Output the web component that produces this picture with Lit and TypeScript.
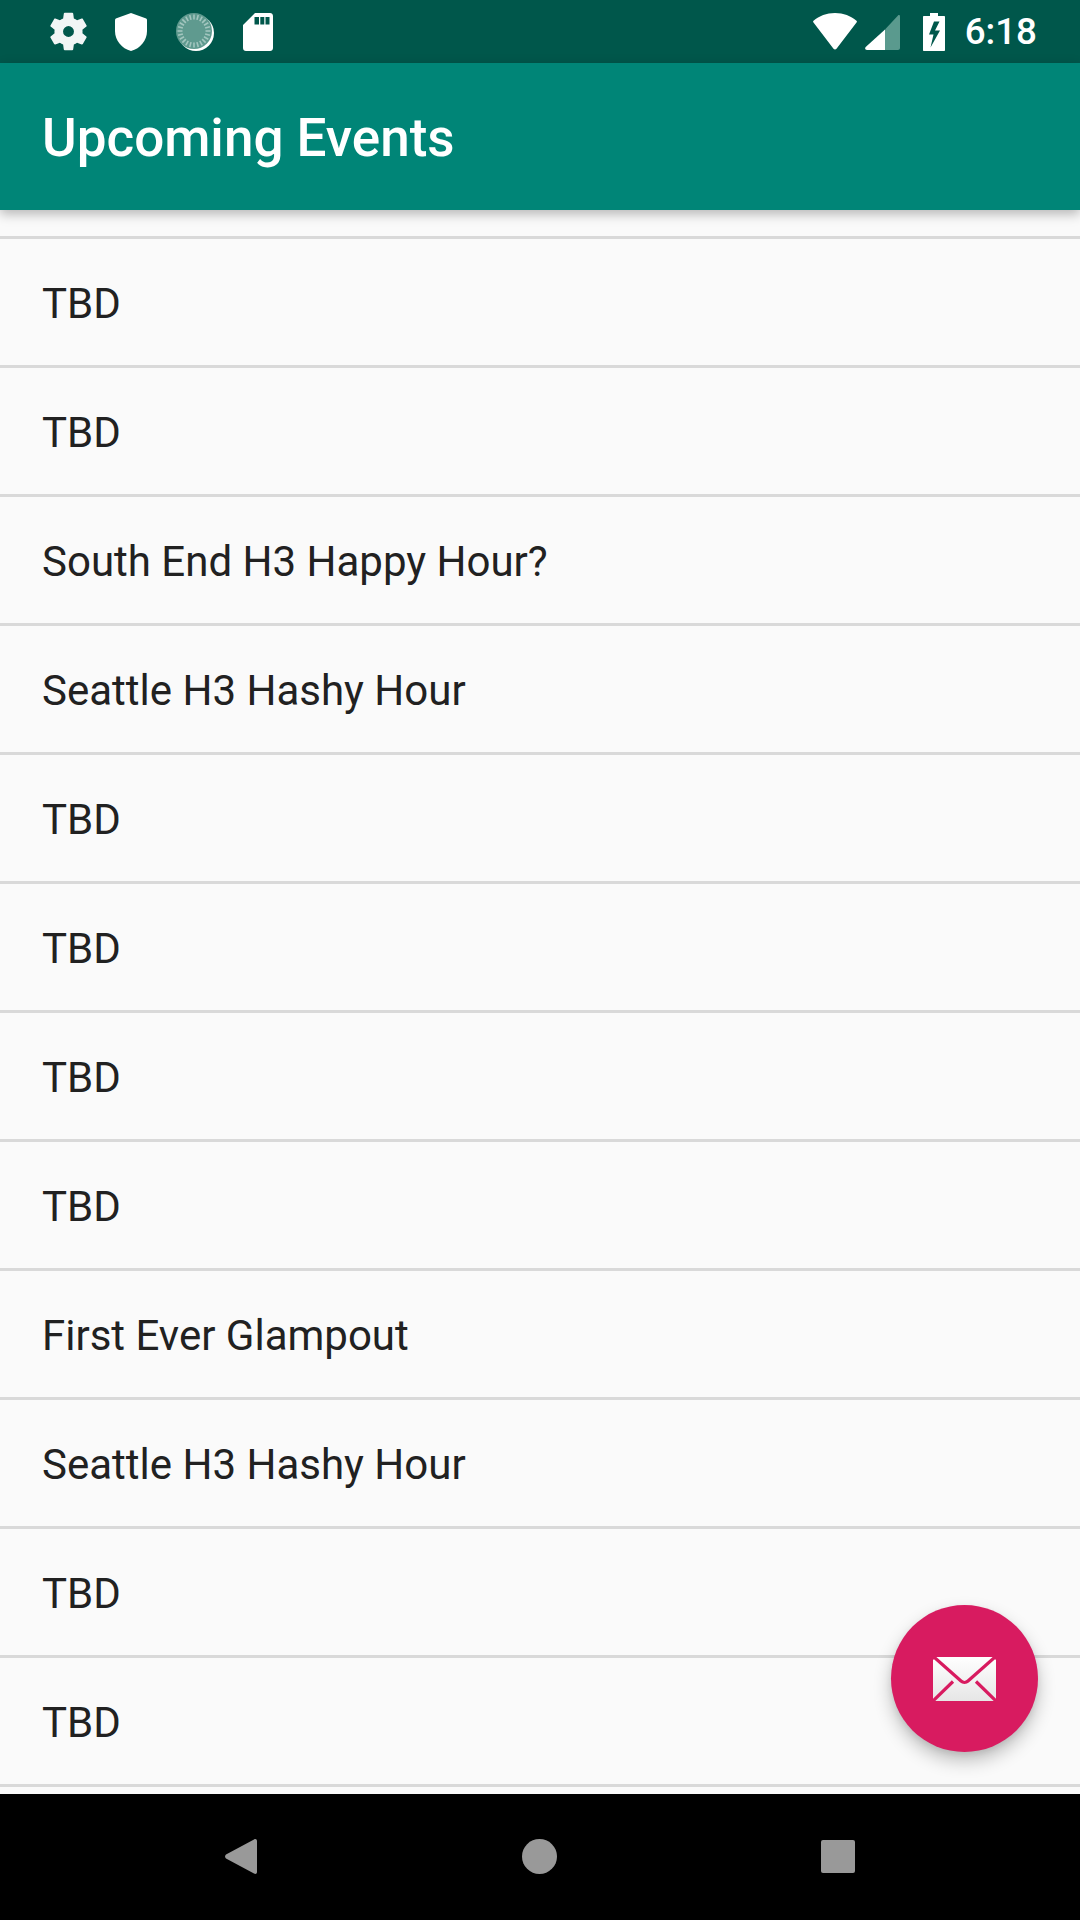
import { LitElement, html, css, svg } from 'lit';
import { customElement } from 'lit/decorators.js';

const EVENTS = [
  'TBD',
  'TBD',
  'South End H3 Happy Hour?',
  'Seattle H3 Hashy Hour',
  'TBD',
  'TBD',
  'TBD',
  'TBD',
  'First Ever Glampout',
  'Seattle H3 Hashy Hour',
  'TBD',
  'TBD',
];

// little ticks round the sync disc
const TICKS = Array.from({ length: 24 }, (_, i) => (i * 360) / 24);

@customElement('app-root')
export class AppRoot extends LitElement {
  static styles = css`
    :host {
      display: block;
      font-family: Roboto, 'Liberation Sans', sans-serif;
    }
    .screen {
      background: #fafafa;
      display: flex;
      flex-direction: column;
      height: 1920px;
      overflow: hidden;
      position: relative;
      width: 1080px;
    }
    .status {
      align-items: center;
      background: #00574b;
      color: #fff;
      display: flex;
      flex: none;
      height: 63px;
      padding: 0 43px 0 50px;
    }
    .status svg { display: block; flex: none; }
    .gear { margin-right: 28px; }
    .shield { margin-right: 29px; }
    .sync { margin-right: 29px; }
    .spacer { flex: 1; }
    .wifi { margin-right: 8px; }
    .signal { margin-right: 23px; }
    .battery { margin-right: 20px; }
    .time {
      font-size: 36.75px;
      font-weight: 500;
      line-height: 63px;
    }
    .appbar {
      align-items: center;
      background: #008577;
      box-shadow: 0 4px 11px rgba(0, 0, 0, 0.28);
      box-sizing: border-box;
      color: #fff;
      display: flex;
      flex: none;
      font-size: 53px;
      font-weight: 500;
      height: 147px;
      padding: 2px 42px 0;
      position: relative;
      z-index: 1;
    }
    .list {
      flex: 1;
      overflow: hidden;
      padding-top: 26px;
    }
    .row {
      align-items: center;
      border-top: 3px solid #d9d9d9;
      box-sizing: border-box;
      color: #212121;
      display: flex;
      font-size: 42px;
      height: 129px;
      padding: 2px 42px 0;
    }
    .row.end { height: 10px; padding: 0; }
    .nav {
      background: #000;
      display: flex;
      flex: none;
      height: 126px;
      padding: 45px 225px 0;
      box-sizing: border-box;
      justify-content: space-between;
    }
    .nav svg { display: block; }
    .fab {
      align-items: center;
      background: #d81b60;
      border-radius: 50%;
      bottom: 168px;
      box-shadow: 0 9px 18px rgba(0, 0, 0, 0.24), 0 3px 6px rgba(0, 0, 0, 0.08);
      display: flex;
      height: 147px;
      justify-content: center;
      position: absolute;
      right: 42px;
      width: 147px;
      z-index: 2;
    }
  `;

  private _statusLeft() {
    return html`
      <svg class="gear" width="37" height="39" viewBox="2.6 2 18.8 20">
        <path fill="#f1f5f5" fill-rule="evenodd" d="M19.14 12.94c.04-.3.06-.61.06-.94 0-.32-.02-.64-.07-.94l2.03-1.58c.18-.14.23-.41.12-.61l-1.92-3.32c-.12-.22-.37-.29-.59-.22l-2.39.96c-.5-.38-1.03-.7-1.62-.94l-.36-2.54c-.04-.24-.24-.41-.48-.41h-3.84c-.24 0-.43.17-.47.41l-.36 2.54c-.59.24-1.13.57-1.62.94l-2.39-.96c-.22-.08-.47 0-.59.22L2.74 8.87c-.12.21-.08.47.12.61l2.03 1.58c-.05.3-.09.63-.09.94s.02.64.07.94l-2.03 1.58c-.18.14-.23.41-.12.61l1.92 3.32c.12.22.37.29.59.22l2.39-.96c.5.38 1.03.7 1.62.94l.36 2.54c.05.24.24.41.48.41h3.84c.24 0 .44-.17.47-.41l.36-2.54c.59-.24 1.13-.56 1.62-.94l2.39.96c.22.08.47 0 .59-.22l1.92-3.32c.12-.22.07-.47-.12-.61l-2.01-1.58zM12 9.200a2.800 2.800 0 1 0 0 5.600 2.800 2.800 0 0 0 0-5.600z"/>
      </svg>
      <svg class="shield" width="32" height="38" viewBox="0 0 32 38">
        <path fill="#fff" d="M16 0l14.500 5.200c1 .4 1.500 1.100 1.500 2V18c0 9.600-6.600 17.400-16 20C6.600 35.400 0 27.600 0 18V7.200c0-.9.5-1.600 1.500-2z"/>
      </svg>
      <svg class="sync" width="38" height="38" viewBox="0 0 38 38">
        <circle cx="20" cy="20" r="18" fill="#fff"/>
        <circle cx="18" cy="18" r="18" fill="#5f9a8f"/>
        ${TICKS.map(a => svg`<line x1="18" y1="1.500" x2="18" y2="6.500" stroke="#a3c6bf" stroke-width="1.600" transform="rotate(${a} 18 18)"/>`)}
      </svg>
      <svg width="30" height="38" viewBox="0 0 30 38">
        <path fill="#fff" fill-rule="evenodd" d="M12 0h15c1.700 0 3 1.300 3 3v32c0 1.700-1.300 3-3 3H3c-1.700 0-3-1.300-3-3V12zM11.500 4v7.500h4.500V4zM17.300 4v7.500h4V4zM22.500 4v7.500h4V4z"/>
      </svg>
    `;
  }

  private _statusRight() {
    return html`
      <svg class="wifi" width="44" height="37" viewBox="0 0 44 37">
        <path fill="#fff" d="M22 0c8.500 0 15.800 3 21.500 7.700.5.400.6 1 .2 1.500L23.500 35.800c-.8 1-2.200 1-3 0L.3 9.200c-.4-.5-.3-1.100.2-1.500C6.200 3 13.500 0 22 0z"/>
      </svg>
      <svg class="signal" width="35" height="36" viewBox="0 0 35 36">
        <path fill="#5a9a8e" d="M20 15.500L33 1.500c.8-.8 2-.3 2 .8V34c0 1.100-.9 2-2 2H20z"/>
        <path fill="#fff" d="M20 15.500V36H2c-1.700 0-2.500-1.800-1.300-3z"/>
      </svg>
      <svg class="battery" width="22" height="38" viewBox="0 0 22 38">
        <path fill="#fff" fill-rule="evenodd" d="M7 0h8v3h6c.6 0 1 .4 1 1v33c0 .6-.4 1-1 1H1c-.6 0-1-.4-1-1V4c0-.6.4-1 1-1h6zM11 8.500L6 21.500h4.500L7.500 34.500 17 17.500h-5L16.500 8.500z"/>
      </svg>
      <span class="time">6:18</span>
    `;
  }

  private _envelope() {
    return html`
      <svg width="63" height="44" viewBox="0 0 63 44">
        <defs>
          <linearGradient id="env" x1="0" y1="0" x2="0" y2="1">
            <stop offset="0" stop-color="#ffffff"/>
            <stop offset="1" stop-color="#e6e6e6"/>
          </linearGradient>
        </defs>
        <rect width="63" height="44" fill="url(#env)"/>
        <path fill="none" stroke="#d81b60" stroke-width="3.200" d="M1.500 0.500L28 24c2 1.800 5 1.800 7 0L61.500 0.500M0 44L20 24.500M63 44L43 24.500"/>
        <path fill="#d81b60" d="M0 0h3L0 3zM63 0h-3l3 3z"/>
      </svg>
    `;
  }

  render() {
    return html`
      <div class="screen">
        <div class="status">
          ${this._statusLeft()}
          <div class="spacer"></div>
          ${this._statusRight()}
        </div>
        <div class="appbar">Upcoming Events</div>
        <div class="list">
          ${EVENTS.map(e => html`<div class="row">${e}</div>`)}
          <div class="row end"></div>
        </div>
        <div class="nav">
          <svg width="32" height="35" viewBox="0 0 32 35">
            <path fill="#999" d="M29 .5c1.500-1 3-.3 3 1.500v31c0 1.800-1.500 2.500-3 1.500L1 19.500c-1.300-1-1.300-3 0-4z"/>
          </svg>
          <svg width="35" height="35" viewBox="0 0 35 35">
            <circle cx="17.500" cy="17.500" r="17.500" fill="#999"/>
          </svg>
          <svg width="34" height="35" viewBox="0 0 34 35">
            <rect y="1" width="34" height="33" rx="2" fill="#999"/>
          </svg>
        </div>
        <div class="fab">${this._envelope()}</div>
      </div>
    `;
  }
}
